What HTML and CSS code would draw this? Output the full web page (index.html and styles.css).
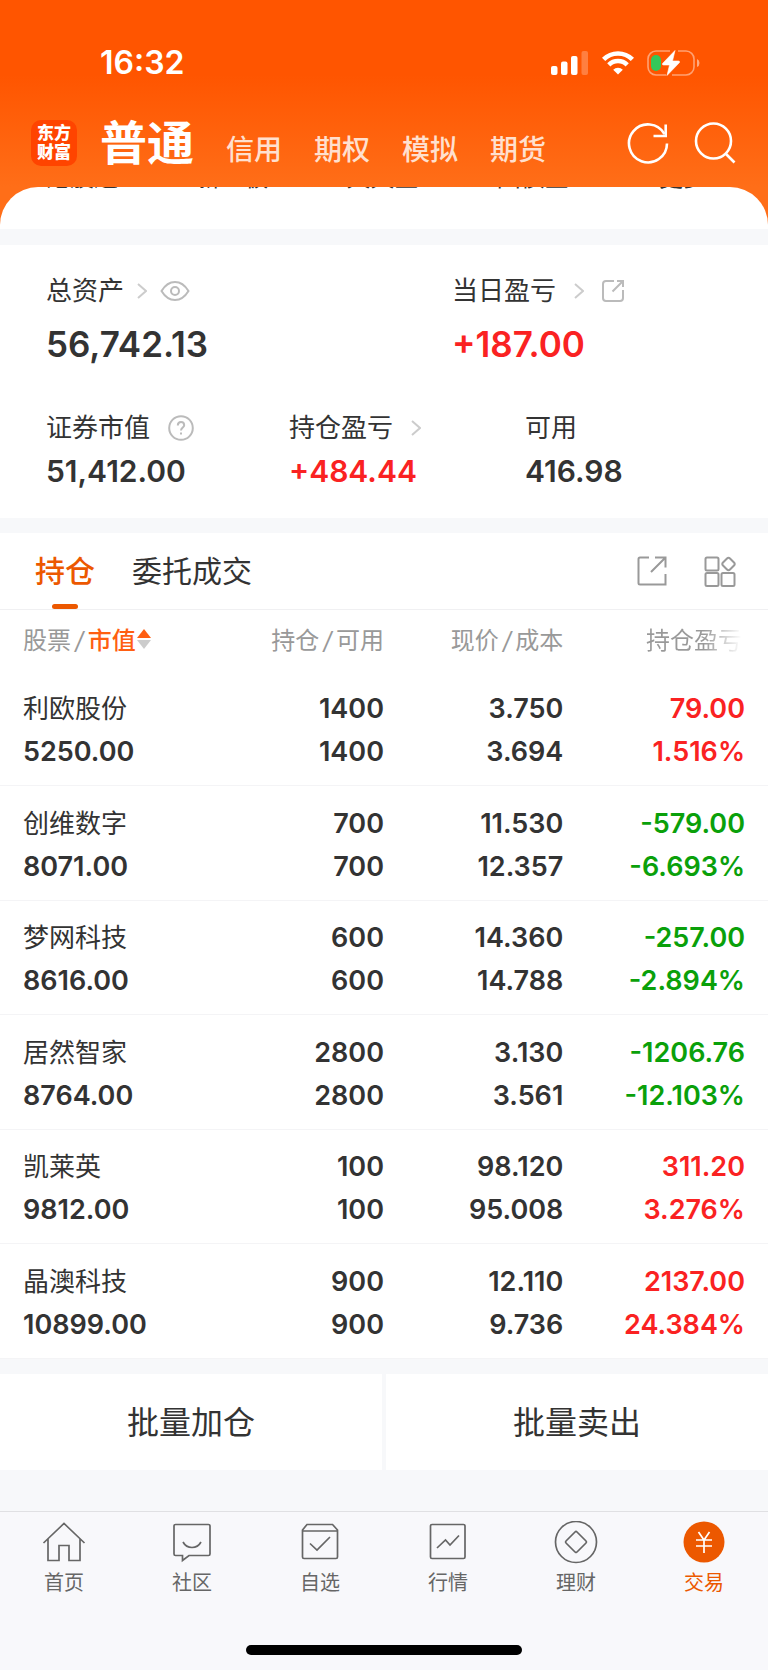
FILE: index.html
```html
<!DOCTYPE html>
<html lang="zh-CN">
<head>
    <meta charset="UTF-8">
    <meta name="viewport" content="width=device-width, initial-scale=1.0">
    <title>交易 - 持仓</title>
    <link rel="stylesheet" href="styles.css">
</head>
<body>
    <header class="header">
        <div class="status-bar">
            <span class="time">16:32</span>
            <div class="status-icons">
                <svg width="38" height="24" viewBox="0 0 38 24" fill="#fff">
                    <rect x="0" y="15" width="6.500" height="9" rx="2"/>
                    <rect x="10" y="10.500" width="6.500" height="13.500" rx="2"/>
                    <rect x="20" y="5" width="6.500" height="19" rx="2"/>
                    <rect x="30.500" y="0" width="6.500" height="24" rx="2" opacity=".25"/>
                </svg>
                <svg width="32" height="24" viewBox="0 0 32 24" fill="none" stroke="#fff" stroke-width="4.6">
                    <path d="M1.600 8.400A20.400 20.400 0 0 1 30.400 8.400"/>
                    <path d="M6.800 13.800A13 13 0 0 1 25.200 13.800"/>
                    <path d="M16 23.500L11.200 18.700A6.800 6.800 0 0 1 20.800 18.700Z" fill="#fff" stroke="none"/>
                </svg>
                <svg width="54" height="26" viewBox="0 0 54 26">
                    <path d="M23 1H9A8 8 0 0 0 1 9V17A8 8 0 0 0 9 25H19M31 1H39A8 8 0 0 1 47 9V17A8 8 0 0 1 39 25H25" fill="none" stroke="#fff" stroke-opacity=".45" stroke-width="1.6"/>
                    <path d="M50 9Q52.500 10 52.500 13T50 17Z" fill="#fff" opacity=".5"/>
                    <rect x="4" y="5" width="10" height="16" rx="5" fill="#34c759"/>
                    <path d="M28 .5L15.500 13.500Q15 15 16.500 15H22.500L20 25.500L32.500 12.500Q33 11 31.500 11H25.500Z" fill="#fff" stroke="#fff" stroke-width=".6" stroke-linejoin="round"/>
                </svg>
            </div>
        </div>
        <div class="title-bar">
            <div class="logo"><span>东方</span><span>财富</span></div>
            <nav class="accounts">
                <a href="#" class="current">普通</a>
                <a href="#">信用</a>
                <a href="#">期权</a>
                <a href="#">模拟</a>
                <a href="#">期货</a>
            </nav>
            <button class="icon-btn" aria-label="刷新">
                <svg width="42" height="42" viewBox="0 0 42 42" fill="none" stroke="#fff" stroke-width="2.6">
                    <path d="M40 21.500A19 19 0 1 1 37.500 12"/>
                    <path d="M26.500 14H38.700V2.500"/>
                </svg>
            </button>
            <button class="icon-btn" aria-label="搜索">
                <svg width="42" height="42" viewBox="0 0 42 42" fill="none" stroke="#fff" stroke-width="2.6">
                    <circle cx="19.500" cy="19" r="17.500"/>
                    <path d="M31.500 31.500L40.500 40.500"/>
                </svg>
            </button>
        </div>
    </header>

    <!-- shortcuts scrolled under the header -->
    <div class="sheet-wrap">
        <div class="sheet">
            <a href="#">港股通</a>
            <a href="#">新三板</a>
            <a href="#">天天宝</a>
            <a href="#">国债宝</a>
            <a href="#">更多</a>
        </div>
    </div>

    <section class="assets">
        <div class="asset-row main">
            <div class="asset">
                <div class="label total">总资产
                    <svg class="chevron" width="10" height="16" viewBox="0 0 10 16"><path d="M1 1L9 8L1 15"/></svg>
                    <svg class="gray-icon" width="30" height="20" viewBox="0 0 30 20"><path d="M1.500 10Q7 1 15 1T28.500 10Q23 19 15 19T1.500 10Z"/><circle cx="15" cy="10" r="4"/></svg>
                </div>
                <div class="value">56,742.13</div>
            </div>
            <div class="asset">
                <div class="label">当日盈亏
                    <svg class="chevron" width="10" height="16" viewBox="0 0 10 16"><path d="M1 1L9 8L1 15"/></svg>
                    <svg class="gray-icon" width="22" height="22" viewBox="0 0 22 22"><path d="M12 1H4Q1 1 1 4V18Q1 21 4 21H18Q21 21 21 18V10M10.500 11.500L20.500 1.500M15 1H21V7"/></svg>
                </div>
                <div class="value up">+187.00</div>
            </div>
        </div>
        <div class="asset-row sub">
            <div class="asset">
                <div class="label">证券市值
                    <svg class="gray-icon" width="26" height="26" viewBox="0 0 26 26"><circle cx="13" cy="13" r="11.800"/><path d="M9.800 10.500Q9.800 7 13 7T16.200 10.300C16.200 12.500 13 12.500 13 15.500M13 17.500V19.500"/></svg>
                </div>
                <div class="value">51,412.00</div>
            </div>
            <div class="asset">
                <div class="label">持仓盈亏
                    <svg class="chevron" width="10" height="16" viewBox="0 0 10 16"><path d="M1 1L9 8L1 15"/></svg>
                </div>
                <div class="value up">+484.44</div>
            </div>
            <div class="asset">
                <div class="label">可用</div>
                <div class="value">416.98</div>
            </div>
        </div>
    </section>

    <section class="positions">
        <div class="tabs">
            <button class="tab active">持仓</button>
            <button class="tab">委托成交</button>
            <button class="icon-btn share" aria-label="分享">
                <svg width="30" height="30" viewBox="0 0 30 30"><path d="M12 1.500H3Q1.500 1.500 1.500 3V27Q1.500 28.500 3 28.500H28.500V18M14 16L28 2M18 1.500H28.500V11.500"/></svg>
            </button>
            <button class="icon-btn" aria-label="更多功能">
                <svg width="32" height="32" viewBox="0 0 32 32"><rect x="1.500" y="2.500" width="13" height="13" rx="1.500"/><rect x="1.500" y="18" width="13" height="13" rx="1.500"/><rect x="17.500" y="18" width="13" height="13" rx="1.500"/><path d="M23 3.500Q24.500 2 26 3.500L30 7.500Q31.500 9 30 10.500L26 14.500Q24.500 16 23 14.500L19 10.500Q17.500 9 19 7.500Z"/></svg>
            </button>
        </div>
        <table>
            <thead>
                <tr>
                    <th>股票<i>/</i><b>市值</b><svg width="14" height="20" viewBox="0 0 14 20"><path d="M7 0L14 9H0Z" fill="#ff5f12"/><path d="M0 11H14L7 20Z" fill="#ccc"/></svg></th>
                    <th>持仓<i>/</i>可用</th>
                    <th>现价<i>/</i>成本</th>
                    <th><span class="fade">持仓盈亏</span></th>
                </tr>
            </thead>
            <tbody>
                <tr>
                    <td><span class="name">利欧股份</span><br>5250.00</td>
                    <td>1400<br>1400</td>
                    <td>3.750<br>3.694</td>
                    <td class="up">79.00<br>1.516%</td>
                </tr>
                <tr>
                    <td><span class="name">创维数字</span><br>8071.00</td>
                    <td>700<br>700</td>
                    <td>11.530<br>12.357</td>
                    <td class="down">-579.00<br>-6.693%</td>
                </tr>
                <tr>
                    <td><span class="name">梦网科技</span><br>8616.00</td>
                    <td>600<br>600</td>
                    <td>14.360<br>14.788</td>
                    <td class="down">-257.00<br>-2.894%</td>
                </tr>
                <tr>
                    <td><span class="name">居然智家</span><br>8764.00</td>
                    <td>2800<br>2800</td>
                    <td>3.130<br>3.561</td>
                    <td class="down">-1206.76<br>-12.103%</td>
                </tr>
                <tr>
                    <td><span class="name">凯莱英</span><br>9812.00</td>
                    <td>100<br>100</td>
                    <td>98.120<br>95.008</td>
                    <td class="up">311.20<br>3.276%</td>
                </tr>
                <tr>
                    <td><span class="name">晶澳科技</span><br>10899.00</td>
                    <td>900<br>900</td>
                    <td>12.110<br>9.736</td>
                    <td class="up">2137.00<br>24.384%</td>
                </tr>
            </tbody>
        </table>
    </section>

    <div class="batch">
        <button>批量加仓</button>
        <button>批量卖出</button>
    </div>

    <footer class="tabbar">
        <nav>
            <a href="#">
                <svg width="44" height="44" viewBox="0 0 44 44"><path d="M1.500 22L22 2.500L42.500 22M6 18V39.500H17V24.500H27V39.500H38V18"/></svg>
                首页
            </a>
            <a href="#">
                <svg width="44" height="44" viewBox="0 0 44 44"><path d="M5.500 3.500H38.500Q40 3.500 40 5V33Q40 34.500 38.500 34.500H19L12.500 39.500V34.500H5.500Q4 34.500 4 33V5Q4 3.500 5.500 3.500ZM13 21Q16 26.500 22 26.500T31 21"/></svg>
                社区
            </a>
            <a href="#">
                <svg width="44" height="44" viewBox="0 0 44 44"><path d="M9 3.500H34.500L39.500 9V36Q39.500 37.500 38 37.500H6Q4.500 37.500 4.500 36V9ZM4.500 10H39.500M12 22.500L19 29L32 16"/></svg>
                自选
            </a>
            <a href="#">
                <svg width="44" height="44" viewBox="0 0 44 44"><rect x="4.500" y="3.500" width="34.500" height="34" rx="1.500"/><path d="M11 27L19.500 19L24 24L33 14.500"/></svg>
                行情
            </a>
            <a href="#">
                <svg width="44" height="44" viewBox="0 0 44 44"><circle cx="22" cy="21" r="20.500"/><path d="M21 11Q22 10 23 11L32 20Q33 21 32 22L23 31Q22 32 21 31L12 22Q11 21 12 20Z"/></svg>
                理财
            </a>
            <a href="#" class="active">
                <svg width="44" height="44" viewBox="0 0 44 44"><circle cx="22" cy="21" r="20.500" fill="#ec5800" stroke="none"/><path d="M16.500 11L22 19L27.500 11M22 19V32M14 19H30M14 25H30" stroke="#fff"/></svg>
                交易
            </a>
        </nav>
        <div class="home-indicator"></div>
    </footer>
</body>
</html>
```
FILE: styles.css
```css
* {
    box-sizing: border-box;
}
body {
    margin: 0;
    min-height: 100vh;
    display: flex;
    flex-direction: column;
    font-family: Inter, "Noto Sans CJK SC", sans-serif;
    background: #f7f8fa;
    color: #333;
}
a {
    color: inherit;
    text-decoration: none;
}
button {
    padding: 0;
    border: none;
    background: none;
    color: inherit;
    font: inherit;
    cursor: pointer;
}
svg {
    display: block;
    flex: none;
}
.up { color: #fa2222; }
.down { color: #0aa00a; }

/* header */
.header {
    height: 187px;
    background: linear-gradient(#ff5500 40%, #ff6e18);
    color: #fff;
}
.status-bar {
    display: flex;
    justify-content: space-between;
    align-items: center;
    padding: 43px 67px 0 100px;
}
.time {
    font-size: 32px;
    line-height: 40px;
    font-weight: 600;
}
.status-icons {
    display: flex;
    align-items: center;
    gap: 13px;
}
.title-bar {
    display: flex;
    align-items: center;
    padding: 22px 32px 0 31px;
}
.logo {
    width: 46px;
    height: 46px;
    border-radius: 10px;
    background: #ff4400;
    display: flex;
    flex-direction: column;
    align-items: center;
    justify-content: center;
    font-size: 17px;
    line-height: 19px;
    font-weight: 900;
}
.accounts {
    flex: 1;
    display: flex;
    align-items: baseline;
    gap: 32px;
    margin-left: 23px;
    padding-top: 8px;
    font-size: 28px;
    line-height: 60px;
    font-weight: 500;
    color: #ffe0cf;
}
.accounts .current {
    font-size: 47px;
    font-weight: 700;
    color: #fff;
}
.title-bar .icon-btn + .icon-btn {
    margin-left: 25px;
}

.sheet-wrap {
    background: #ff6e18;
}
.sheet {
    height: 42px;
    border-radius: 38px 38px 0 0;
    background: #fff;
    overflow: hidden;
    display: grid;
    grid-template-columns: repeat(5, 1fr);
    align-content: end;
    padding: 0 10px 36px 7px;
    font-size: 24px;
    line-height: 30px;
    text-align: center;
}

/* assets */
.assets {
    margin: 16px 0 15px;
    padding: 26px 48px 24px 46px;
    background: #fff;
}
.asset-row {
    display: grid;
}
.asset-row.main {
    grid-template-columns: 406fr 268fr;
    margin-bottom: 31px;
}
.asset-row.sub {
    grid-template-columns: 243fr 236fr 195fr;
}
.label {
    display: flex;
    align-items: center;
    gap: 18px;
    font-size: 26px;
    line-height: 40px;
}
.label.total {
    gap: 13px;
}
.value {
    font-size: 30px;
    line-height: 46px;
    font-weight: 600;
}
.main .value {
    font-size: 35px;
    line-height: 66px;
}
.chevron,
.gray-icon {
    fill: none;
    stroke: #bbb;
    stroke-width: 2;
}
.chevron {
    stroke: #ccc;
}

/* positions */
.positions {
    background: #fff;
}
.tabs {
    display: flex;
    align-items: center;
    padding: 0 32px 0 35px;
    border-bottom: 1px solid #f0f0f2;
    height: 77px;
    font-size: 30px;
    line-height: 76px;
}
.tab {
    position: relative;
    margin-right: 37px;
}
.tab.active {
    color: #ec5800;
    font-weight: 500;
}
.tab.active::after {
    content: "";
    position: absolute;
    left: 50%;
    bottom: 0;
    width: 26px;
    height: 5px;
    margin-left: -13px;
    border-radius: 3px;
    background: #ec5800;
}
.tabs .icon-btn svg {
    fill: none;
    stroke: #999;
    stroke-width: 2;
}
.share {
    margin: 0 37px 0 auto;
}
table {
    width: 100%;
    table-layout: fixed;
    border-collapse: collapse;
}
th {
    height: 61px;
    padding: 0 0 4px;
    text-align: right;
    font-size: 24px;
    font-weight: 400;
    color: #999;
}
th i {
    margin: 0 4px;
}
th b {
    font-weight: 500;
    color: #ff5f12;
}
th svg {
    display: inline-block;
    margin-left: 1px;
}
.fade {
    background: linear-gradient(90deg, #999 60%, #fff);
    background-clip: text;
    color: transparent;
}
th:first-child,
td:first-child {
    width: 27%;
    padding-left: 23px;
    text-align: left;
}
th:nth-child(2) { width: 23%; }
th:nth-child(3) { width: 24%; }
td {
    height: 114px;
    padding: 14px 0 10px;
    border-bottom: 1px solid #f4f4f6;
    text-align: right;
    font-size: 27px;
    line-height: 43px;
    font-weight: 600;
}
th:nth-child(3),
td:nth-child(3) {
    padding-right: 5px;
}
td:last-child {
    padding-right: 23px;
}
th:last-child {
    padding-right: 26px;
}
tr:nth-child(even) td {
    height: 115px;
}
.name {
    font-size: 26px;
    font-weight: 400;
}

.batch {
    display: grid;
    grid-template-columns: 1fr 1fr;
    gap: 4px;
    margin-top: 15px;
}
.batch button {
    height: 96px;
    padding-bottom: 3px;
    background: #fff;
    font-size: 32px;
}

/* bottom bar */
.tabbar {
    margin-top: auto;
    padding: 9px 0 15px;
    border-top: 1px solid #e0e0e3;
    background: #f8f8fb;
}
.tabbar nav {
    display: flex;
}
.tabbar a {
    flex: 1;
    display: flex;
    flex-direction: column;
    align-items: center;
    gap: 3px;
    font-size: 20px;
    line-height: 30px;
    color: #666;
}
.tabbar a.active {
    color: #ec5800;
}
.tabbar svg {
    fill: none;
    stroke: currentColor;
    stroke-width: 1.7;
}
.home-indicator {
    width: 36%;
    height: 10px;
    margin: 47px auto 0;
    border-radius: 5px;
    background: #000;
}
```
